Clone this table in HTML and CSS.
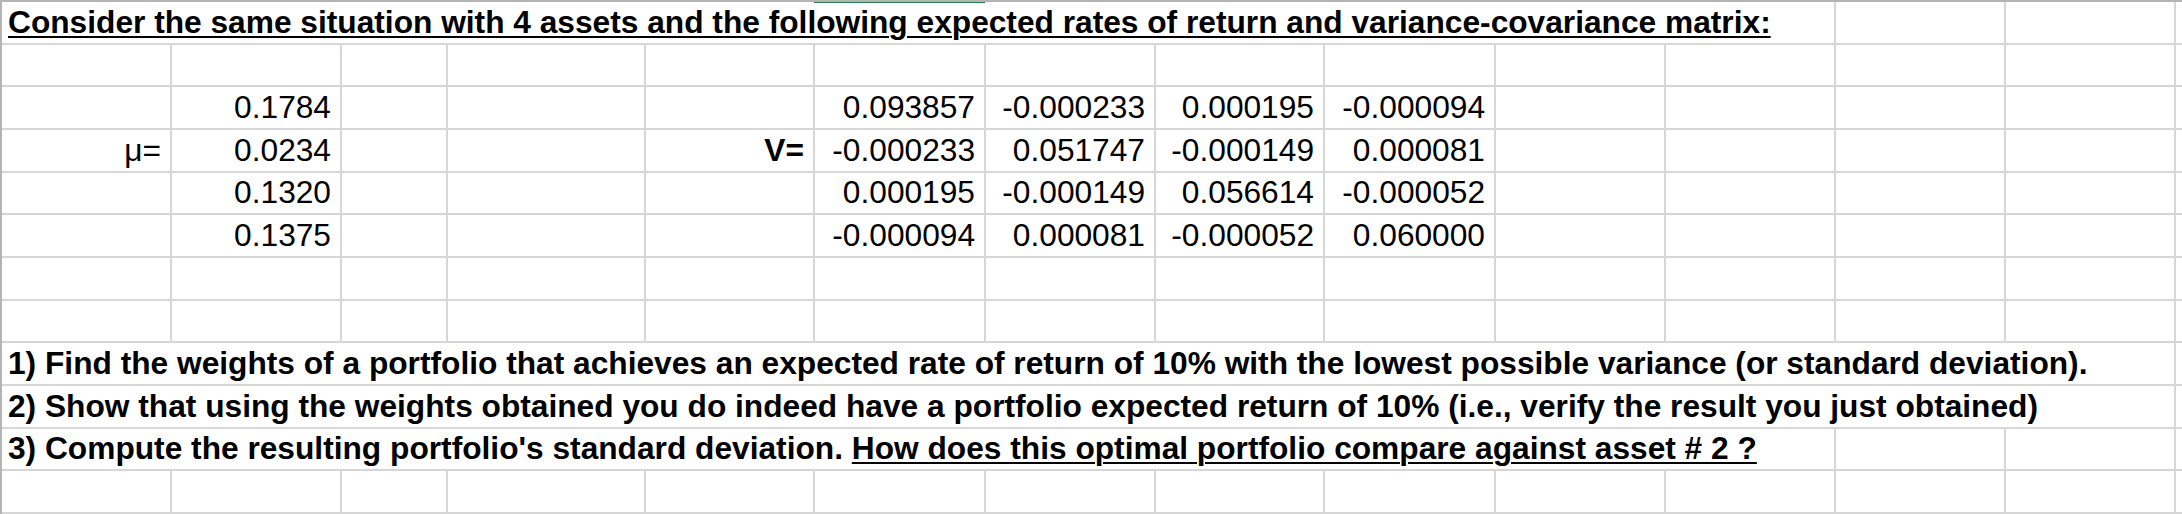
FILE: index.html
```html
<!DOCTYPE html>
<html lang="en">
<head>
<meta charset="utf-8">
<title>Portfolio problem</title>
<link rel="stylesheet" href="styles.css">
</head>
<body>
<div class="sheet">
  <div class="sel"></div>

  <!-- row 1 -->
  <div class="c t s11"><span class="u">Consider the same situation with 4 assets and the following expected rates of return and variance-covariance matrix:</span></div>
  <div class="c"></div><div class="c"></div><div class="c e"></div>

  <!-- row 2 -->
  <div class="c"></div><div class="c"></div><div class="c"></div><div class="c"></div><div class="c"></div><div class="c"></div><div class="c"></div><div class="c"></div><div class="c"></div><div class="c"></div><div class="c"></div><div class="c"></div><div class="c"></div><div class="c e"></div>

  <!-- row 3 -->
  <div class="c"></div><div class="c">0.1784</div><div class="c"></div><div class="c"></div><div class="c"></div>
  <div class="c">0.093857</div><div class="c">-0.000233</div><div class="c">0.000195</div><div class="c">-0.000094</div>
  <div class="c"></div><div class="c"></div><div class="c"></div><div class="c"></div><div class="c e"></div>

  <!-- row 4 -->
  <div class="c">μ=</div><div class="c">0.0234</div><div class="c"></div><div class="c"></div><div class="c b">V=</div>
  <div class="c">-0.000233</div><div class="c">0.051747</div><div class="c">-0.000149</div><div class="c">0.000081</div>
  <div class="c"></div><div class="c"></div><div class="c"></div><div class="c"></div><div class="c e"></div>

  <!-- row 5 -->
  <div class="c"></div><div class="c">0.1320</div><div class="c"></div><div class="c"></div><div class="c"></div>
  <div class="c">0.000195</div><div class="c">-0.000149</div><div class="c">0.056614</div><div class="c">-0.000052</div>
  <div class="c"></div><div class="c"></div><div class="c"></div><div class="c"></div><div class="c e"></div>

  <!-- row 6 -->
  <div class="c"></div><div class="c">0.1375</div><div class="c"></div><div class="c"></div><div class="c"></div>
  <div class="c">-0.000094</div><div class="c">0.000081</div><div class="c">-0.000052</div><div class="c">0.060000</div>
  <div class="c"></div><div class="c"></div><div class="c"></div><div class="c"></div><div class="c e"></div>

  <!-- row 7 -->
  <div class="c"></div><div class="c"></div><div class="c"></div><div class="c"></div><div class="c"></div><div class="c"></div><div class="c"></div><div class="c"></div><div class="c"></div><div class="c"></div><div class="c"></div><div class="c"></div><div class="c"></div><div class="c e"></div>

  <!-- row 8 -->
  <div class="c"></div><div class="c"></div><div class="c"></div><div class="c"></div><div class="c"></div><div class="c"></div><div class="c"></div><div class="c"></div><div class="c"></div><div class="c"></div><div class="c"></div><div class="c"></div><div class="c"></div><div class="c e"></div>

  <!-- row 9 -->
  <div class="c t s13">1) Find the weights of a portfolio that achieves an expected rate of return of 10% with the lowest possible variance (or standard deviation).</div>
  <div class="c e"></div>

  <!-- row 10 -->
  <div class="c t s13">2) Show that using the weights obtained you do indeed have a portfolio expected return of 10% (i.e., verify the result you just obtained)</div>
  <div class="c e"></div>

  <!-- row 11 -->
  <div class="c t s11">3) Compute the resulting portfolio's standard deviation.&nbsp;<span class="u">How does this optimal portfolio compare against asset # 2 ?</span></div>
  <div class="c"></div><div class="c"></div><div class="c e"></div>

  <!-- row 12 -->
  <div class="c"></div><div class="c"></div><div class="c"></div><div class="c"></div><div class="c"></div><div class="c"></div><div class="c"></div><div class="c"></div><div class="c"></div><div class="c"></div><div class="c"></div><div class="c"></div><div class="c"></div><div class="c e"></div>
</div>
</body>
</html>
```

FILE: styles.css
```css
* {
  box-sizing: border-box;
}

html, body {
  margin: 0;
  padding: 0;
  background: #ffffff;
}

.sheet {
  position: relative;
  width: 2182px;
  height: 514px;
  border-top: 2px solid #b4b4b4;
  border-left: 2px solid #b4b4b4;
  display: grid;
  grid-template-columns: 170px 170px 106px 198px 169px 171px 170px 169px 171px 170px 170px 170px 170px 6px;
  grid-template-rows: repeat(12, 1fr);
  font-family: "Liberation Sans", Arial, sans-serif;
  font-size: 31.7px;
  color: #000000;
  overflow: hidden;
}

.sel {
  position: absolute;
  top: -2px;
  left: 812px;
  width: 171px;
  height: 3px;
  background: #2b7a4b;
  z-index: 2;
}

.c {
  min-width: 0;
  border-right: 2px solid #d6d6d6;
  border-bottom: 2px solid #d6d6d6;
  display: flex;
  align-items: flex-end;
  justify-content: flex-end;
  padding: 0 9px 3px 6px;
  line-height: 36px;
  white-space: nowrap;
  overflow: visible;
}

.c.e {
  border-right: 0;
  padding: 0;
}

.t {
  justify-content: flex-start;
  font-weight: bold;
}

.b {
  font-weight: bold;
}

.u {
  text-decoration: underline;
  text-decoration-thickness: 2px;
  text-underline-offset: 3px;
}

.s11 {
  grid-column: span 11;
}

.s13 {
  grid-column: span 13;
}
```
